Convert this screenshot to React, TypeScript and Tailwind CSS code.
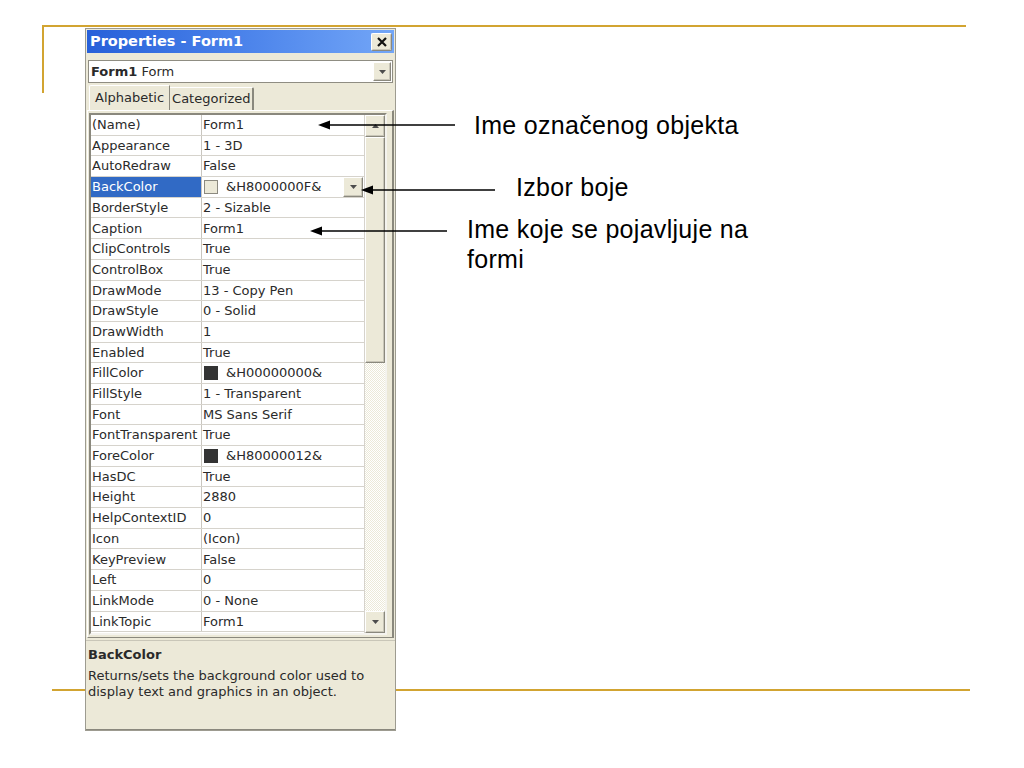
import React from "react";

type Row = { name: string; value: string; swatch?: "light" | "dark"; selected?: boolean; dropdown?: boolean };

const rows: Row[] = [
  { name: "(Name)", value: "Form1" },
  { name: "Appearance", value: "1 - 3D" },
  { name: "AutoRedraw", value: "False" },
  { name: "BackColor", value: "&H8000000F&", swatch: "light", selected: true, dropdown: true },
  { name: "BorderStyle", value: "2 - Sizable" },
  { name: "Caption", value: "Form1" },
  { name: "ClipControls", value: "True" },
  { name: "ControlBox", value: "True" },
  { name: "DrawMode", value: "13 - Copy Pen" },
  { name: "DrawStyle", value: "0 - Solid" },
  { name: "DrawWidth", value: "1" },
  { name: "Enabled", value: "True" },
  { name: "FillColor", value: "&H00000000&", swatch: "dark" },
  { name: "FillStyle", value: "1 - Transparent" },
  { name: "Font", value: "MS Sans Serif" },
  { name: "FontTransparent", value: "True" },
  { name: "ForeColor", value: "&H80000012&", swatch: "dark" },
  { name: "HasDC", value: "True" },
  { name: "Height", value: "2880" },
  { name: "HelpContextID", value: "0" },
  { name: "Icon", value: "(Icon)" },
  { name: "KeyPreview", value: "False" },
  { name: "Left", value: "0" },
  { name: "LinkMode", value: "0 - None" },
  { name: "LinkTopic", value: "Form1" },
];

const ui = "font-['DejaVu_Sans',sans-serif]";

function Tri({ up }: { up?: boolean }) {
  return (
    <svg width="7" height="4" viewBox="0 0 7 4">
      {up ? <polygon points="0,4 7,4 3.5,0" fill="#4d4d4d" /> : <polygon points="0,0 7,0 3.5,4" fill="#4d4d4d" />}
    </svg>
  );
}

function RaisedBtn({ className, children }: { className: string; children?: React.ReactNode }) {
  return (
    <div
      className={`flex items-center justify-center bg-[#ECE9D8] border border-t-white border-l-white border-r-[#8a887d] border-b-[#8a887d] shadow-[inset_-1px_-1px_0_#c9c6b8] ${className}`}
    >
      {children}
    </div>
  );
}

function Panel() {
  return (
    <div className={`${ui} relative z-10 w-[311px] h-[703px] bg-[#ECE9D8] border border-[#9d9b90] flex flex-col text-[13px] text-[#2a2a2a]`}>
      {/* title */}
      <div className="mt-[1px] mx-[1px] h-[23px] bg-linear-to-r from-[#2760d9] via-[#4a82ea] to-[#73a6f7] flex items-center justify-between pl-[3px] pr-[2px]">
        <span className="text-white font-bold text-[14.5px]">Properties - Form1</span>
        <RaisedBtn className="w-[21px] h-[18px] rounded-[2px]">
          <svg width="10" height="10" viewBox="0 0 10 10">
            <path d="M1 1 L9 9 M9 1 L1 9" stroke="#111" strokeWidth="2.2" />
          </svg>
        </RaisedBtn>
      </div>
      {/* combo */}
      <div className="mt-[7px] mx-[2px] h-[23px] bg-white border border-[#8f8d82] flex items-center justify-between pl-[2px]">
        <span>
          <b>Form1</b> Form
        </span>
        <RaisedBtn className="w-[18px] h-[19px] mr-[1px]">
          <Tri />
        </RaisedBtn>
      </div>
      {/* tabs */}
      <div className="mt-[2px] h-[25px] flex items-end pl-[3px]">
        <div className="h-[25px] px-[5px] flex items-center border-t border-l border-white border-r border-r-[#8a887d] rounded-tl-[2px]">
          Alphabetic
        </div>
        <div className="h-[23px] px-[2px] flex items-center border-t border-white border-r-2 border-r-[#8a887d] rounded-tr-[2px]">
          Categorized
        </div>
      </div>
      {/* tab page */}
      <div className="ml-[1px] mr-[1px] h-[528px] border-l border-t border-white border-r-2 border-r-[#8a887d] border-b border-b-[#8a887d] pt-[2px] pl-[1px] pr-[5px]">
        <div className="h-[522px] border-2 border-t-[#8a887d] border-l-[#8a887d] border-r-[#f4f3ee] border-b-[#f4f3ee] flex">
          <div className="flex-1 bg-white flex flex-col">
            {rows.map((r) => (
              <div key={r.name} className="h-[20.7px] flex border-b border-[#d6d3cc] shrink-0">
                <div
                  className={`w-[111px] border-r border-[#c9c6bf] pl-[1px] flex items-center whitespace-nowrap ${
                    r.selected ? "bg-[#316AC5] text-white" : ""
                  }`}
                >
                  {r.name}
                </div>
                <div className="flex-1 flex items-center pl-[1px] whitespace-nowrap">
                  {r.swatch === "light" && <span className="w-[14px] h-[14px] ml-[1px] mr-[8px] border border-[#8c8a80] bg-[#ECE9D8]" />}
                  {r.swatch === "dark" && <span className="w-[14px] h-[14px] ml-[1px] mr-[8px] bg-[#333]" />}
                  <span className="flex-1">{r.value}</span>
                  {r.dropdown && (
                    <RaisedBtn className="w-[20px] h-[20px] mr-[1px]">
                      <Tri />
                    </RaisedBtn>
                  )}
                </div>
              </div>
            ))}
          </div>
          {/* scrollbar */}
          <div className="w-[21px] flex flex-col border-l border-[#d6d3cc] bg-[repeating-conic-gradient(#ffffff_0_25%,#ece9d8_0_50%)] bg-[length:2px_2px]">
            <RaisedBtn className="h-[22px]">
              <Tri up />
            </RaisedBtn>
            <RaisedBtn className="h-[226px]" />
            <div className="flex-1" />
            <RaisedBtn className="h-[22px]">
              <Tri />
            </RaisedBtn>
          </div>
        </div>
      </div>
      {/* description */}
      <div className="mt-[2px] h-[90px] border-t border-[#c9c6b8] border-b border-b-[#8a887d] px-[2px] pt-[6px] leading-[16px]">
        <div className="font-bold mb-[5px]">BackColor</div>
        <div>Returns/sets the background color used to</div>
        <div>display text and graphics in an object.</div>
      </div>
    </div>
  );
}

export default function App() {
  return (
    <div className="relative w-[1024px] h-[768px] bg-white overflow-hidden">
      {/* slide decorations */}
      <div className="absolute left-[42px] top-[25px] w-[924px] h-[2px] bg-[#D2A431]" />
      <div className="absolute left-[42px] top-[25px] w-[2px] h-[68px] bg-[#D2A431]" />
      <div className="absolute left-[52px] top-[689px] w-[918px] h-[2px] bg-[#D2A431]" />

      <div className="flex pt-[28px] pl-[85px]">
        <Panel />
        <div className="flex flex-col font-['Liberation_Sans',Arial,sans-serif] text-[25px] tracking-[0.3px] text-black">
          <div className="mt-[83px] ml-[78px] leading-[28px] whitespace-nowrap">Ime označenog objekta</div>
          <div className="mt-[34px] ml-[120px] leading-[28px] whitespace-nowrap">Izbor boje</div>
          <div className="mt-[13px] ml-[71px] leading-[30px] whitespace-nowrap">
            Ime koje se pojavljuje na
            <br />
            formi
          </div>
        </div>
      </div>

      {/* arrows */}
      <svg className="absolute left-0 top-0 z-20 pointer-events-none" width="1024" height="768">
        <g stroke="#000" strokeWidth="1.5">
          <line x1="326" y1="125" x2="455" y2="125" />
          <line x1="369" y1="190" x2="495" y2="190" />
          <line x1="318" y1="231" x2="447" y2="231" />
        </g>
        <g fill="#000">
          <polygon points="318,125 330,120.5 330,129.5" />
          <polygon points="361,190 373,185.5 373,194.5" />
          <polygon points="310,231 322,226.5 322,235.5" />
        </g>
      </svg>
    </div>
  );
}
